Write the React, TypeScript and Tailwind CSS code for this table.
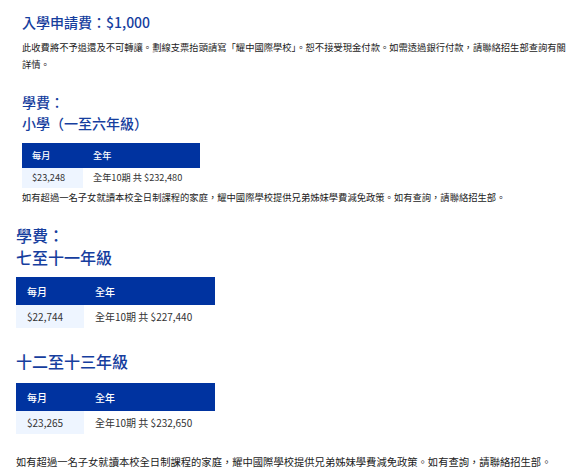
import React from "react";

const font = { fontFamily: '"Noto Sans CJK TC", "Noto Sans", sans-serif' };

function FeeTable({
  small,
  monthly,
  yearly,
}: {
  small?: boolean;
  monthly: string;
  yearly: string;
}) {
  if (small) {
    return (
      <div className="mt-[9px] w-[178px] text-[9.2px]">
        <div className="flex h-[25px] items-center bg-[#0033a0] font-medium text-white">
          <div className="w-[61px] pl-[10px]">每月</div>
          <div className="pl-[10px]">全年</div>
        </div>
        <div className="flex h-[20px] items-stretch text-[#333]">
          <div className="flex w-[61px] items-center bg-[#eef5ff] pl-[10px]">{monthly}</div>
          <div className="flex items-center pl-[10px]">{yearly}</div>
        </div>
      </div>
    );
  }
  return (
    <div className="w-[199px] text-[10px]">
      <div className="flex h-[28px] items-center bg-[#0033a0] font-medium text-white">
        <div className="w-[68px] pl-[11px]">每月</div>
        <div className="pl-[11px]">全年</div>
      </div>
      <div className="flex h-[23px] items-stretch text-[#333]">
        <div className="flex w-[68px] items-center bg-[#eef5ff] pl-[11px]">{monthly}</div>
        <div className="flex items-center pl-[11px]">{yearly}</div>
      </div>
    </div>
  );
}

export default function App() {
  return (
    <div className="h-[474px] w-[570px] overflow-hidden bg-white" style={font}>
      <div className="pl-[22px]">
        <div className="mt-[12px] text-[14px] font-medium leading-[20px] text-[#163e9e]">
          入學申請費：$1,000
        </div>
        <p className="mt-[7px] w-[552px] text-[9.3px] leading-[17px] text-[#222]">
          此收費將不予退還及不可轉讓。劃線支票抬頭請寫「耀中國際學校」。恕不接受現金付款。如需透過銀行付款，請聯絡招生部查詢有關
          <br />
          詳情。
        </p>
        <div className="mt-[19px] text-[14px] font-medium leading-[21px] text-[#163e9e]">
          學費：
          <br />
          小學（一至六年級）
        </div>
        <FeeTable small monthly="$23,248" yearly="全年10期 共 $232,480" />
        <p className="mt-[2px] text-[9.3px] leading-[14px] text-[#222]">
          如有超過一名子女就讀本校全日制課程的家庭，耀中國際學校提供兄弟姊妹學費減免政策。如有查詢，請聯絡招生部。
        </p>
      </div>

      <div className="pl-[16px]">
        <div className="mt-[20px] text-[16px] font-medium leading-[22px] text-[#163e9e]">
          學費：
          <br />
          七至十一年級
        </div>
        <div className="mt-[9px]">
          <FeeTable monthly="$22,744" yearly="全年10期 共 $227,440" />
        </div>
        <div className="mt-[22px] text-[16px] font-medium leading-[22px] text-[#163e9e]">
          十二至十三年級
        </div>
        <div className="mt-[11px]">
          <FeeTable monthly="$23,265" yearly="全年10期 共 $232,650" />
        </div>
        <p className="mt-[20px] text-[10.3px] leading-[16px] text-[#222]">
          如有超過一名子女就讀本校全日制課程的家庭，耀中國際學校提供兄弟姊妹學費減免政策。如有查詢，請聯絡招生部。
        </p>
      </div>
    </div>
  );
}
